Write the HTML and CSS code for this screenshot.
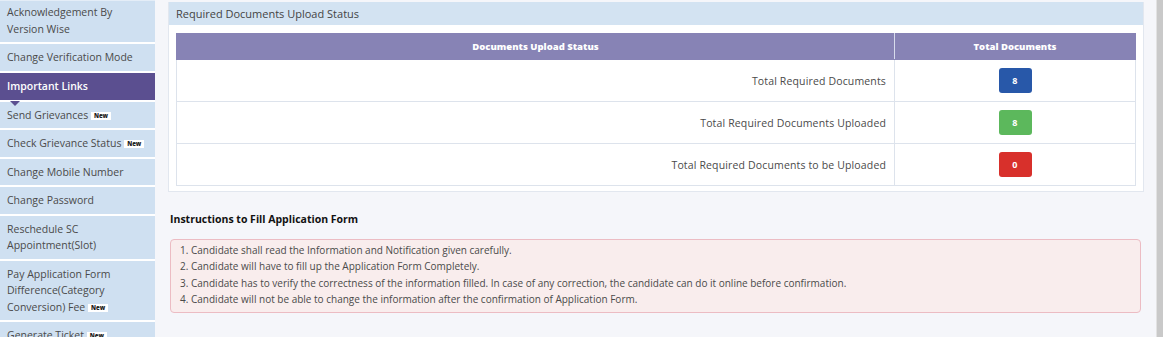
FILE: index.html
```html
<!DOCTYPE html>
<html>
<head>
  <title>Candidate Dashboard</title>
  <link rel="stylesheet" href="styles.css">
</head>
<body>
  <div class="page">
    <aside class="sidebar">
      <a class="side-item" href="#">Acknowledgement By Version Wise</a>
      <a class="side-item" href="#">Change Verification Mode</a>
      <div class="side-head">Important Links</div>
      <a class="side-item" href="#">Send Grievances <span class="new">New</span></a>
      <a class="side-item" href="#">Check Grievance Status <span class="new">New</span></a>
      <a class="side-item" href="#">Change Mobile Number</a>
      <a class="side-item" href="#">Change Password</a>
      <a class="side-item" href="#">Reschedule SC Appointment(Slot)</a>
      <a class="side-item" href="#">Pay Application Form Difference(Category Conversion) Fee <span class="new">New</span></a>
      <a class="side-item" href="#">Generate Ticket <span class="new">New</span></a>
    </aside>

    <main class="content">
      <section class="panel">
        <div class="panel-head">Required Documents Upload Status</div>
        <div class="panel-body">
          <table class="status-table">
            <thead>
              <tr>
                <th>Documents Upload Status</th>
                <th class="col-total">Total Documents</th>
              </tr>
            </thead>
            <tbody>
              <tr>
                <td class="label">Total Required Documents</td>
                <td class="count"><span class="badge blue">8</span></td>
              </tr>
              <tr>
                <td class="label">Total Required Documents Uploaded</td>
                <td class="count"><span class="badge green">8</span></td>
              </tr>
              <tr>
                <td class="label">Total Required Documents to be Uploaded</td>
                <td class="count"><span class="badge red">0</span></td>
              </tr>
            </tbody>
          </table>
        </div>
      </section>

      <h4 class="instr-title">Instructions to Fill Application Form</h4>
      <ol class="instr-box">
        <li>Candidate shall read the Information and Notification given carefully.</li>
        <li>Candidate will have to fill up the Application Form Completely.</li>
        <li>Candidate has to verify the correctness of the information filled. In case of any correction, the candidate can do it online before confirmation.</li>
        <li>Candidate will not be able to change the information after the confirmation of Application Form.</li>
      </ol>
    </main>

    <div class="scrollbar"></div>
  </div>
</body>
</html>
```

FILE: styles.css
```css
body {
  font-family: 'Open Sans', 'DejaVu Sans', sans-serif;
  background-color: #f5f6fa;
  color: #444;
  margin: 0;
  height: 337px;
  overflow: hidden;
}

.page {
  display: flex;
  height: 337px;
}

/* left menu */
.sidebar {
  width: 155px;
  flex-shrink: 0;
  background-color: #fff;
  display: flex;
  flex-direction: column;
}

.side-item {
  display: block;
  background-color: #cfe0f1;
  color: #4a4a4a;
  text-decoration: none;
  font-size: 10.5px;
  line-height: 16.5px;
  padding: 5px 4px 5px 7px;
  border-bottom: 2px solid #fff;
}

.side-item:first-child {
  padding-top: 3px;
  border-top: 1px solid #e4edf7;
}

.side-head {
  position: relative;
  background-color: #5b4f90;
  color: #fff;
  font-size: 10.5px;
  font-weight: 600;
  line-height: 17px;
  padding: 5px 7px;
  border-bottom: 2px solid #fff;
}

.side-head::after {
  content: '';
  position: absolute;
  left: 10px;
  bottom: -6px;
  border-left: 5px solid transparent;
  border-right: 5px solid transparent;
  border-top: 5px solid #5b4f90;
}

.new {
  display: inline-block;
  background-color: #fff;
  color: #222;
  font-size: 6px;
  font-weight: 800;
  line-height: 8px;
  padding: 0 3px;
  vertical-align: 1px;
}

/* main area */
.content {
  flex: 1;
  padding: 2px 12px 0 13px;
}

.panel {
  background-color: #fff;
  border: 1px solid #e2e7ef;
  border-top: none;
}

.panel-head {
  background-color: #d3e3f2;
  font-size: 11px;
  line-height: 23px;
  padding: 0 7px;
  color: #444;
}

.panel-body {
  padding: 8px 7px 5px;
}

.status-table {
  width: 100%;
  border-collapse: collapse;
  font-size: 10.5px;
}

.status-table th {
  background-color: #8783b5;
  color: #fff;
  font-size: 9.5px;
  font-weight: 800;
  height: 25px;
  padding: 0 8px;
  border: 1px solid #8783b5;
  border-right-color: #d8dcec;
}

.status-table th:last-child {
  border-right-color: #8783b5;
}

.status-table .col-total {
  width: 224px;
}

.status-table td {
  height: 41px;
  padding: 0 8px;
  border: 1px solid #dde3ec;
  color: #4a4a4a;
  letter-spacing: 0.15px;
}

.status-table td.label {
  text-align: right;
}

.status-table td.count {
  text-align: center;
}

.badge {
  display: inline-block;
  width: 33px;
  height: 25px;
  line-height: 25px;
  border-radius: 3px;
  color: #fff;
  font-weight: 700;
  font-size: 9px;
}

.badge.blue {
  background-color: #2858a9;
}

.badge.green {
  background-color: #5cb85c;
}

.badge.red {
  background-color: #d8302b;
}

.instr-title {
  margin: 20px 0 13px 2px;
  font-size: 10.5px;
  font-weight: 700;
  color: #111;
}

.instr-box {
  margin: 0 3px 0 2px;
  padding: 2px 8px 4px 20px;
  background-color: #f9eded;
  border: 1px solid #ecbcc3;
  border-radius: 4px;
  font-size: 10px;
  line-height: 16.4px;
  color: #4a4a4a;
}

.scrollbar {
  width: 6px;
  flex-shrink: 0;
  background-color: #c9c9c9;
  border-left: 1px solid #e2e2e2;
}
```
